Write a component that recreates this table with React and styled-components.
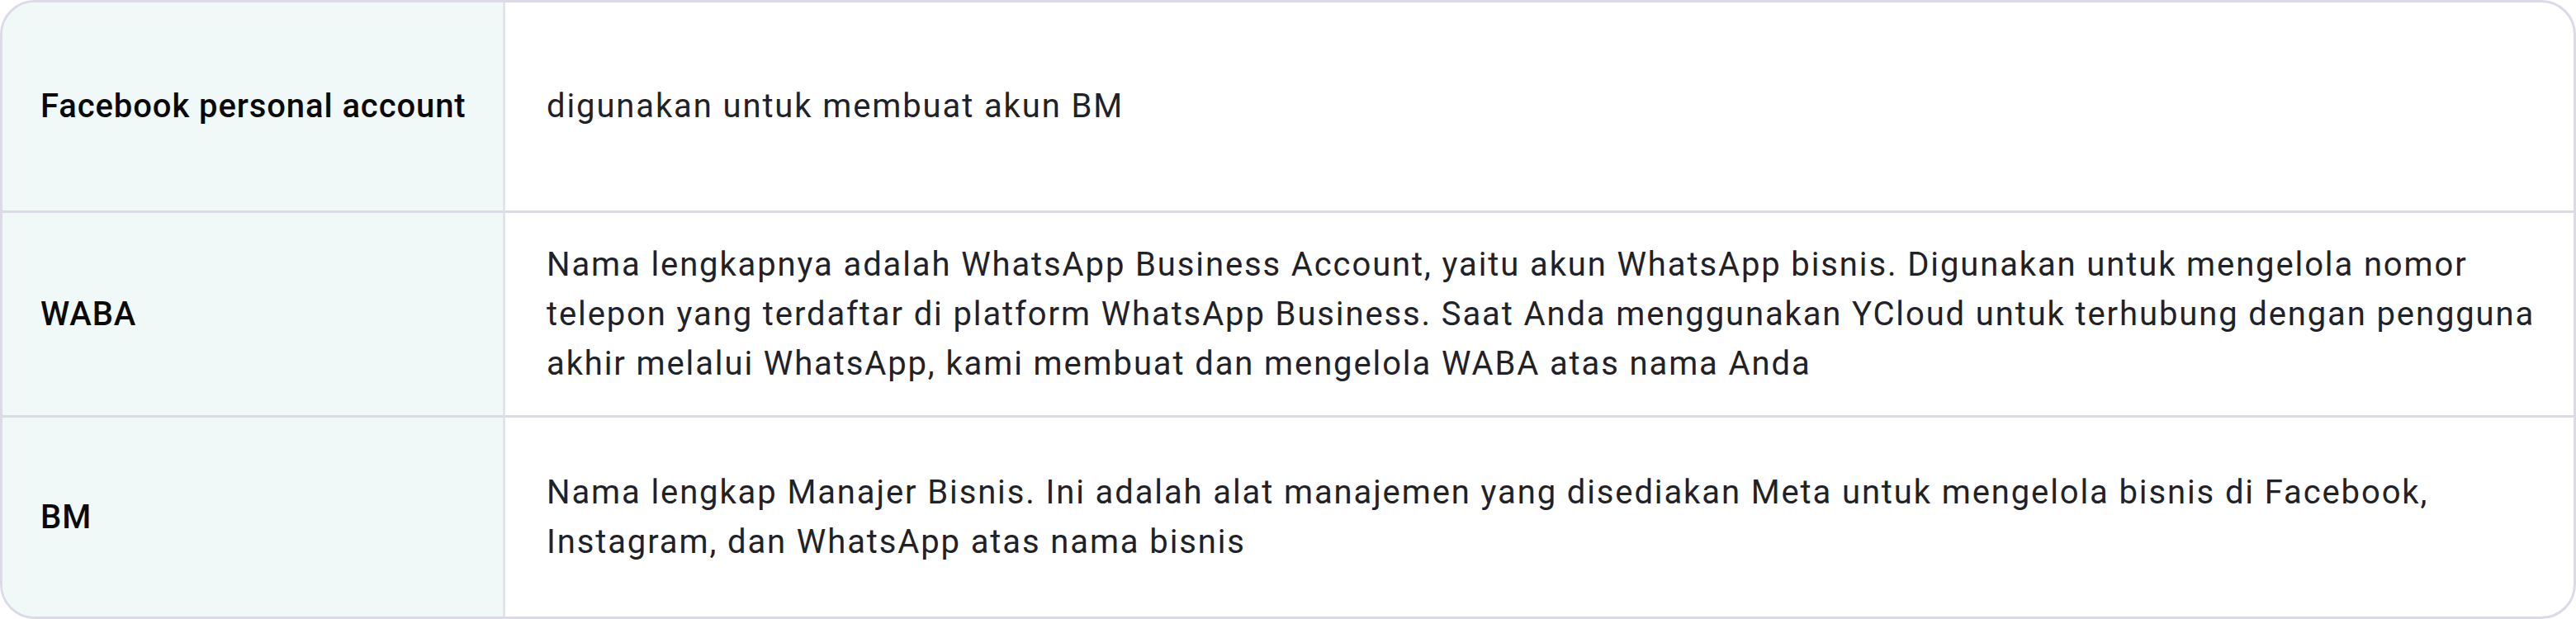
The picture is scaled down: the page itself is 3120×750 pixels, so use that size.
import React from "react";
import styled, { createGlobalStyle } from "styled-components";

const Global = createGlobalStyle`
  html, body { margin: 0; padding: 0; background: #ffffff; }
  body { font-family: Roboto, "Noto Sans", sans-serif; }
`;

const Table = styled.div`
  box-sizing: border-box;
  width: 100%;
  height: 750px;
  display: grid;
  grid-template-columns: 609px 1fr;
  grid-template-rows: 252px 248px 1fr;
  border: 3px solid #dcdae6;
  border-radius: 42px;
  overflow: hidden;
  background: #ffffff;
`;

const HeadCell = styled.div`
  display: flex;
  align-items: center;
  padding: 0 30px 0 46px;
  background: #f0f9f8;
  border-right: 3px solid #e3e2ec;
  border-top: ${(p) => (p.$first ? "none" : "3px solid #dcdae6")};
  font-size: 40px;
  font-weight: 500;
  line-height: 60px;
  letter-spacing: 0.9px;
  white-space: nowrap;
  color: #0a0a0a;
`;

const DescCell = styled.div`
  display: flex;
  align-items: center;
  padding: 0 30px 0 50px;
  border-top: ${(p) => (p.$first ? "none" : "3px solid #dcdae6")};
  font-size: 40px;
  font-weight: 400;
  line-height: 60px;
  letter-spacing: 1.88px;
  color: #1f2329;
`;

const rows = [
  {
    term: "Facebook personal account",
    desc: "digunakan untuk membuat akun BM",
  },
  {
    term: "WABA",
    desc: "Nama lengkapnya adalah WhatsApp Business Account, yaitu akun WhatsApp bisnis. Digunakan untuk mengelola nomor telepon yang terdaftar di platform WhatsApp Business. Saat Anda menggunakan YCloud untuk terhubung dengan pengguna akhir melalui WhatsApp, kami membuat dan mengelola WABA atas nama Anda",
  },
  {
    term: "BM",
    desc: "Nama lengkap Manajer Bisnis. Ini adalah alat manajemen yang disediakan Meta untuk mengelola bisnis di Facebook, Instagram, dan WhatsApp atas nama bisnis",
  },
];

export default function App() {
  return (
    <>
      <Global />
      <Table>
        {rows.map((r, i) => (
          <React.Fragment key={r.term}>
            <HeadCell $first={i === 0}>{r.term}</HeadCell>
            <DescCell $first={i === 0}>{r.desc}</DescCell>
          </React.Fragment>
        ))}
      </Table>
    </>
  );
}
